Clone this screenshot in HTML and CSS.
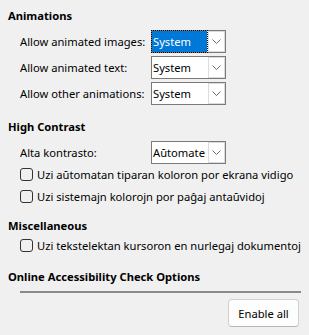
FILE: index.html
```html
<!DOCTYPE html>
<html lang="eo">
<head>
<meta charset="UTF-8">
<title>Accessibility Options</title>
<link rel="stylesheet" href="styles.css">
</head>
<body>
<div class="page">
    <div class="heading">Animations</div>
    <div class="rows">
        <div class="label">Allow animated images:</div>
        <div class="combo focus"><span class="value">System</span><span class="arrow"><svg width="9" height="5" viewBox="0 0 9 5"><path d="M0.5 0.5 L4.5 4.5 L8.5 0.5" fill="none" stroke="#6d6d6d" stroke-width="1"/></svg></span></div>
        <div class="label">Allow animated text:</div>
        <div class="combo"><span class="value">System</span><span class="arrow"><svg width="9" height="5" viewBox="0 0 9 5"><path d="M0.5 0.5 L4.5 4.5 L8.5 0.5" fill="none" stroke="#6d6d6d" stroke-width="1"/></svg></span></div>
        <div class="label">Allow other animations:</div>
        <div class="combo"><span class="value">System</span><span class="arrow"><svg width="9" height="5" viewBox="0 0 9 5"><path d="M0.5 0.5 L4.5 4.5 L8.5 0.5" fill="none" stroke="#6d6d6d" stroke-width="1"/></svg></span></div>
    </div>

    <div class="heading">High Contrast</div>
    <div class="rows tight">
        <div class="label">Alta kontrasto:</div>
        <div class="combo"><span class="value">Aŭtomate</span><span class="arrow"><svg width="9" height="5" viewBox="0 0 9 5"><path d="M0.5 0.5 L4.5 4.5 L8.5 0.5" fill="none" stroke="#6d6d6d" stroke-width="1"/></svg></span></div>
    </div>
    <div class="check"><span class="box"></span>Uzi aŭtomatan tiparan koloron por ekrana vidigo</div>
    <div class="check"><span class="box"></span>Uzi sistemajn kolorojn por paĝaj antaŭvidoj</div>

    <div class="heading misc">Miscellaneous</div>
    <div class="check"><span class="box"></span>Uzi tekstelektan kursoron en nurlegaj dokumentoj</div>

    <div class="heading online">Online Accessibility Check Options</div>
    <div class="separator"></div>
    <div class="actions">
        <button class="button">Enable all</button>
    </div>
</div>
</body>
</html>
```

FILE: styles.css
```css
body {
    margin: 0;
    background-color: #f0f0f0;
    font-family: 'Noto Sans', 'Open Sans', sans-serif;
    font-size: 11.2px;
    color: #000000;
    overflow: hidden;
}
.page {
    display: flex;
    flex-direction: column;
    padding: 8px 0 0 8px;
}
.heading {
    font-weight: bold;
    line-height: 16px;
    height: 16px;
    margin-bottom: 6px;
    white-space: nowrap;
}
.heading.misc {
    margin-top: 11px;
    margin-bottom: 0;
}
.heading.online {
    margin-top: 13px;
    margin-bottom: 0;
}
.rows {
    display: grid;
    grid-template-columns: 131px 75px;
    row-gap: 3px;
    padding-left: 12px;
    margin-bottom: 14px;
}
.rows.tight {
    margin-bottom: -1px;
}
.label {
    display: flex;
    align-items: center;
    white-space: nowrap;
}
.combo {
    display: flex;
    height: 23px;
    box-sizing: border-box;
    border: 1px solid #7a7a7a;
    background-color: #ffffff;
}
.value {
    flex: 1;
    display: flex;
    align-items: center;
    padding-left: 1px;
    white-space: nowrap;
    overflow: hidden;
}
.combo.focus .value {
    background-color: #0078d7;
    color: #ffffff;
    outline: 1px dotted #000000;
    outline-offset: 0;
    margin-right: 1px;
}
.arrow {
    flex-shrink: 0;
    width: 15px;
    border: 1px solid #dcdcdc;
    display: flex;
    align-items: center;
    justify-content: center;
}
.check {
    display: flex;
    align-items: center;
    height: 22px;
    padding-left: 12px;
    white-space: nowrap;
}
.box {
    flex-shrink: 0;
    width: 11px;
    height: 11px;
    border: 1px solid #333333;
    border-radius: 3px;
    margin-right: 4px;
}
.separator {
    height: 2px;
    background-color: #878a8f;
    margin: 6px 8px 0 12px;
}
.actions {
    display: flex;
    justify-content: flex-end;
    padding: 6px 10px 0 0;
}
.button {
    width: 71px;
    height: 28px;
    background-color: #fdfdfd;
    border: 1px solid #d0d0d0;
    border-bottom-color: #b8b8b8;
    border-radius: 4px;
    font-family: inherit;
    font-size: 11.2px;
    color: #000000;
    padding: 0;
}
```
